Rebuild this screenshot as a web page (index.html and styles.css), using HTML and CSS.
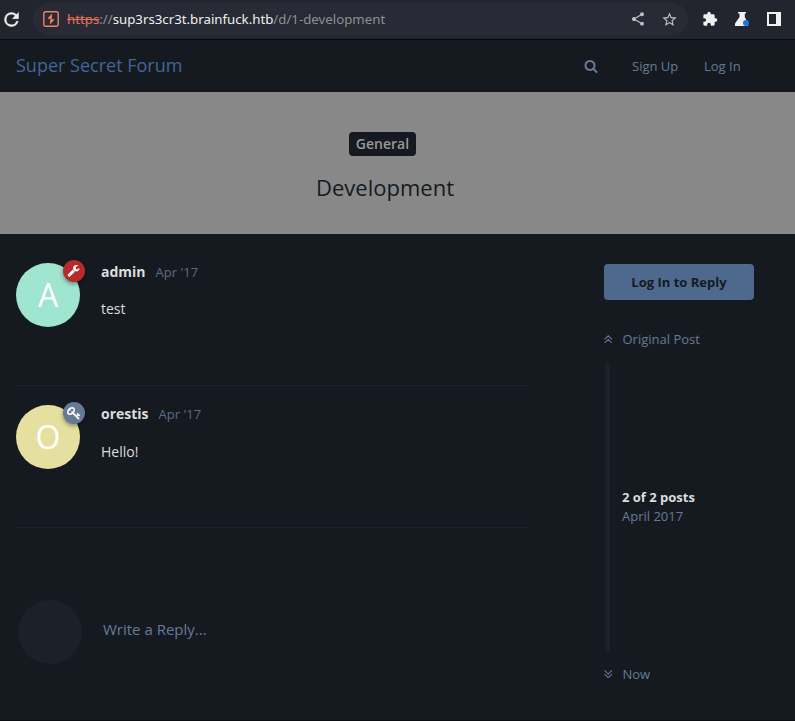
FILE: index.html
```html
<!DOCTYPE html>
<html lang="en">
<head>
<meta charset="utf-8">
<title>Development - Super Secret Forum</title>
<link rel="stylesheet" href="styles.css">
</head>
<body>
<div class="browser">
  <svg class="reload" viewBox="0 0 24 24"><path d="M17.65 6.35A7.96 7.96 0 0 0 12 4a8 8 0 1 0 7.73 10h-2.08A6 6 0 1 1 12 6c1.66 0 3.14.69 4.22 1.78L13 11h7V4z"/></svg>
  <div class="omnibox">
    <svg class="burp" viewBox="0 0 16 16"><rect x=".8" y=".8" width="14.4" height="14.4" rx="1.6"/><path d="M8.600 3.200 5 7.500h3.600zM7.400 12.800V8.500H11z"/></svg>
    <div class="url"><span class="scheme">https</span>://<span class="host">sup3rs3cr3t.brainfuck.htb</span>/d/1-development</div>
    <svg class="share" viewBox="0 0 24 24"><path d="M18 16.08c-.76 0-1.44.3-1.96.77L8.91 12.7c.05-.23.09-.46.09-.7s-.04-.47-.09-.7l7.05-4.11c.54.5 1.25.81 2.04.81a3 3 0 1 0-3-3c0 .24.04.47.09.7L8.04 9.81A3 3 0 1 0 6 15c.79 0 1.5-.31 2.04-.81l7.12 4.16c-.05.21-.08.43-.08.65A2.92 2.92 0 1 0 18 16.08z"/></svg>
    <svg class="star" viewBox="0 0 24 24"><path d="m22 9.24-7.19-.62L12 2 9.19 8.63 2 9.24l5.46 4.73L5.82 21 12 17.27 18.18 21l-1.63-7.03zM12 15.4l-3.76 2.27 1-4.28-3.32-2.88 4.38-.38L12 6.1l1.71 4.04 4.38.38-3.32 2.88 1 4.28z"/></svg>
  </div>
  <svg class="puzzle" viewBox="0 0 24 24"><path d="M20.5 11H19V7a2 2 0 0 0-2-2h-4V3.5a2.5 2.5 0 0 0-5 0V5H4a2 2 0 0 0-2 2v3.8h1.5a2.7 2.7 0 0 1 0 5.4H2V20c0 1.1.9 2 2 2h3.8v-1.5a2.7 2.7 0 0 1 5.4 0V22H17a2 2 0 0 0 2-2v-4h1.500a2.500 2.500 0 0 0 0-5z"/></svg>
  <svg class="flask" viewBox="0 0 14 14"><path d="M3 0h8v1.600H9.800V5L13 11v3H0v-2.500L4.500 5V1.600H3z"/><circle cx="11" cy="11" r="3"/></svg>
  <span class="panel"></span>
</div>

<header class="header">
  <a class="brand">Super Secret Forum</a>
  <svg class="search" viewBox="0 0 1792 1792"><path d="M1216 832q0-185-131.500-316.500t-316.500-131.500-316.500 131.500-131.500 316.500 131.500 316.500 316.500 131.500 316.500-131.500 131.500-316.500zm512 832q0 52-38 90t-90 38q-54 0-90-38l-343-342q-179 124-399 124-143 0-273.500-55.500t-225-150-150-225-55.500-273.500 55.500-273.500 150-225 225-150 273.500-55.500 273.500 55.500 225 150 150 225 55.500 273.500q0 220-124 399l343 343q37 37 37 90z"/></svg>
  <a class="signup">Sign Up</a>
  <a class="login">Log In</a>
</header>

<section class="hero">
  <span class="tag">General</span>
  <h1>Development</h1>
</section>

<main class="page">
  <div class="stream">
    <article class="post">
      <div class="avatar mint">A
        <span class="badge red"><svg viewBox="0 0 1792 1792"><path d="M448 1472q0-26-19-45t-45-19-45 19-19 45 19 45 45 19 45-19 19-45zm644-420l-682 682q-37 37-90 37-52 0-91-37l-106-108q-38-36-38-90 0-53 38-91l681-681q39 98 114.500 173.500t173.500 114.500zm634-435q0 39-23 106-47 134-164.500 217.500t-258.500 83.500q-185 0-316.500-131.500t-131.500-316.500 131.500-316.500 316.500-131.500q58 0 121.500 16.500t107.500 46.500q16 11 16 28t-16 28l-293 169v224l193 107q5-3 79-48.500t135.500-81 70.500-35.500q15 0 23.500 10t8.500 25z"/></svg></span>
      </div>
      <div class="content">
        <div class="meta"><b>admin</b><time>Apr '17</time></div>
        <p>test</p>
      </div>
    </article>
    <article class="post">
      <div class="avatar sand">O
        <span class="badge slate"><svg viewBox="0 0 1792 1792"><path d="M832 512q0-80-56-136t-136-56-136 56-56 136q0 42 19 83-41-19-83-19-80 0-136 56t-56 136 56 136 136 56 136-56 56-136q0-42-19-83 41 19 83 19 80 0 136-56t56-136zm851 704q0 17-49 66t-66 49q-9 0-28.500-16t-36.500-33-38.500-40-24.500-26l-96 96 220 220q28 28 28 68 0 42-39 81t-81 39q-40 0-68-28l-671-671q-176 131-365 131-163 0-265.500-102.500t-102.500-265.500q0-160 95-313t248-248 313-95q163 0 265.500 102.500t102.500 265.500q0 189-131 365l355 355 96-96q-3-3-26-24.500t-40-38.500-33-36.500-16-28.500q0-17 49-66t66-49q13 0 23 10 6 6 46 44.500t82 79.500 86.500 86 73 78 28.500 41z"/></svg></span>
      </div>
      <div class="content">
        <div class="meta"><b>orestis</b><time>Apr '17</time></div>
        <p>Hello!</p>
      </div>
    </article>
    <div class="reply"><span class="avatar blank"></span><span>Write a Reply...</span></div>
  </div>
  <aside class="side">
    <button class="cta">Log In to Reply</button>
    <div class="jump"><svg viewBox="0 0 8 8"><path d="M.5 4.200 4 .8l3.500 3.400M.5 7.600 4 4.200l3.500 3.400"/></svg>Original Post</div>
    <div class="scrubber"><div><b>2 of 2 posts</b><span>April 2017</span></div></div>
    <div class="jump"><svg viewBox="0 0 8 8"><path d="M.5.4 4 3.800 7.500.4M.5 3.800 4 7.200l3.500-3.400"/></svg>Now</div>
  </aside>
</main>
</body>
</html>
```
FILE: styles.css
```css
* { box-sizing: border-box; }

body {
  margin: 0;
  height: 721px;
  overflow: hidden;
  background: #151a20;
  border-bottom: 1px solid #0b0c11;
  color: #ddd;
  font: 13px/20px "Open Sans", sans-serif;
}

svg { display: block; flex: none; fill: currentColor; }

.browser {
  display: flex;
  align-items: center;
  height: 40px;
  padding-bottom: 1px;
  border-bottom: 1px solid #07090d;
  background: #23252e;
  color: #f0f0ee;
}

.reload { width: 21px; height: 21px; margin-left: 1px; stroke: currentColor; stroke-width: .5; }

.omnibox {
  display: flex;
  align-items: center;
  width: 655px;
  height: 32px;
  margin-left: 11px;
  padding: 0 10px 0 10px;
  border-radius: 16px;
  background: #282a35;
}

.burp { width: 16px; height: 16px; fill: none; stroke: #ee8461; stroke-width: 1.4; }
.burp path { fill: #ee8461; stroke-width: .7; }

.url {
  flex: 1;
  margin-left: 8px;
  color: #8d9093;
  font: 13.25px/20px "Noto Sans", sans-serif;
  white-space: nowrap;
}

.scheme { color: #e87456; text-decoration: line-through; }
.host { color: #f0f0ee; }

.share { width: 16px; height: 16px; margin-right: 15px; color: #c0c0c0; }
.star { width: 17px; height: 17px; color: #c0c0c0; }
.puzzle { width: 16px; height: 16px; margin-left: 14px; }
.flask { width: 14px; height: 14px; margin-left: 17px; }
.flask circle { fill: #1a73e8; }
.panel { width: 14px; height: 14px; margin-left: 18px; border: solid #f0f0ee; border-width: 2px 5px 2px 2px; }

.header {
  display: flex;
  align-items: center;
  height: 52px;
  padding-left: 16px;
  color: #667a96;
}

.brand { width: 568px; padding-bottom: 2px; color: #43659a; font-size: 18px; }
.search { width: 14px; height: 14px; }
.signup { width: 72px; margin-left: 34px; }

.hero {
  display: flex;
  flex-direction: column;
  align-items: center;
  height: 142px;
  padding: 40px 30px 0 0;
  background: #888;
  color: #151a20;
}

.tag {
  height: 24px;
  padding: 0 7px;
  border-radius: 4px;
  background: #151a20;
  color: #999;
  font-size: 14px;
  font-weight: 600;
  line-height: 24px;
}

h1 { margin: 16px 0 0 5px; font-size: 22px; font-weight: 400; line-height: 30px; }

.page { display: flex; padding-left: 16px; }
.stream { width: 512px; }

.post {
  display: flex;
  height: 152px;
  padding-top: 29px;
  border-bottom: 1px solid #1c2028;
}

.post + .post { height: 142px; padding-top: 19px; }

.avatar {
  position: relative;
  flex: none;
  width: 64px;
  height: 64px;
  border-radius: 50%;
  color: #fff;
  font-size: 32px;
  line-height: 64px;
  text-align: center;
}

.mint { background: #a0e5d0; }
.sand { background: #e5e0a0; }
.blank { background: #1c2028; }

.badge {
  position: absolute;
  top: -3px;
  right: -5px;
  display: grid;
  place-items: center;
  width: 22px;
  height: 22px;
  padding: 0 1px 1px 0;
  border-radius: 50%;
  box-shadow: 0 2px 4px rgba(0, 0, 0, .4);
}

.badge svg { width: 13px; height: 13px; }
.red { background: #b72a2a; }
.slate { background: #667a96; }
.slate svg { width: 14px; height: 14px; }

.content { margin-left: 21px; font-size: 14px; }
.meta { display: flex; gap: 10px; line-height: 18px; }
.meta b { font-weight: 700; }
time { color: #5c6b84; font-size: 13px; }
p { margin: 18px 0 0; line-height: 20px; }
.post + .post p { margin-top: 19px; }

.reply {
  display: flex;
  gap: 21px;
  margin: 72px 0 0 2px;
  color: #667a96;
  font-size: 15px;
  line-height: 58px;
}

.side { width: 150px; margin-left: 76px; padding-top: 30px; color: #667a96; }

.cta {
  display: block;
  width: 150px;
  height: 36px;
  padding: 0;
  border: 0;
  border-radius: 4px;
  background: #4d698e;
  color: #151a20;
  font: 700 13px/36px "Open Sans", sans-serif;
}

.jump { display: flex; align-items: center; gap: 10px; height: 20px; margin-top: 29px; }
.jump svg { width: 8.5px; height: 8.5px; fill: none; stroke: currentColor; stroke-width: 1; }

.scrubber {
  display: flex;
  align-items: center;
  gap: 12px;
  height: 290px;
  margin: 13px 0 -17px 1px;
}

.scrubber::before { content: ""; width: 5px; height: 100%; border-radius: 3px; background: #1c2028; }
.scrubber div { line-height: 19px; }
.scrubber b, .scrubber span { display: block; }
.scrubber b { color: #ddd; }
```
